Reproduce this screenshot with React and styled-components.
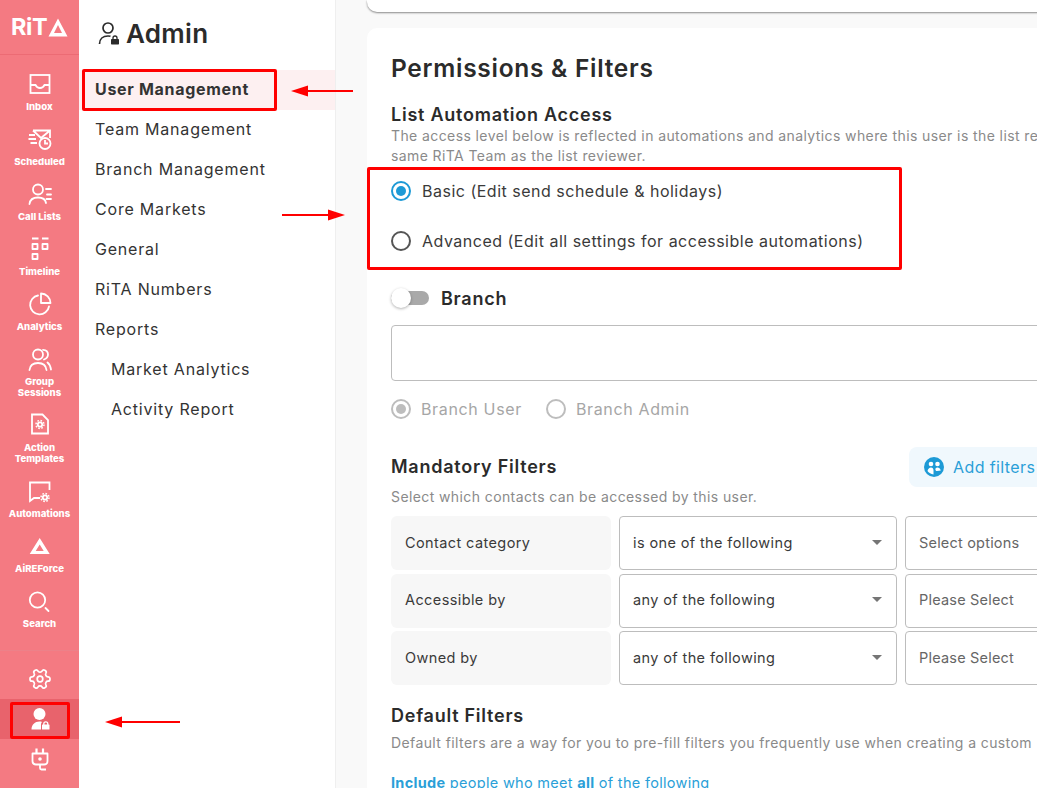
import React from "react";
import styled, { createGlobalStyle } from "styled-components";

const Global = createGlobalStyle`
  html, body { margin: 0; padding: 0; background: #f9f9f9; }
  * { box-sizing: border-box; }
  body { font-family: Inter, "Noto Sans", sans-serif; color: #2b2b2b; }
`;

const Page = styled.div`
  position: relative;
  display: flex;
  width: 1037px;
  height: 788px;
  overflow: hidden;
`;

const Rail = styled.nav`
  width: 79px;
  flex: none;
  display: flex;
  flex-direction: column;
  background: #f47a82;
  color: #fff;
`;
const LogoBar = styled.div`
  height: 55px;
  flex: none;
  display: flex;
  align-items: center;
  gap: 1px;
  padding: 0 0 0 11px;
  border-bottom: 1px solid #ec6b74;
`;
const LogoText = styled.span`
  font-size: 23.5px;
  font-weight: 700;
  letter-spacing: -0.4px;
  line-height: 1;
`;
const RailList = styled.div`
  flex: 1;
  display: flex;
  flex-direction: column;
  padding-top: 17px;
`;
const RailItem = styled.div`
  display: flex;
  flex-direction: column;
  align-items: center;
  padding-bottom: 15px;
`;
const RailIcon = styled.svg`
  width: 24px;
  height: 24px;
  display: block;
  flex: none;
`;
const RailLabel = styled.span`
  margin-top: 5px;
  font-size: 9.6px;
  line-height: 11px;
  font-weight: 800;
  text-align: center;
`;
const RailBottom = styled.div`
  height: 138px;
  flex: none;
  border-top: 1px solid #ec8189;
  padding-top: 8px;
`;
const RailButton = styled.div`
  height: 40px;
  display: flex;
  align-items: center;
  justify-content: center;
  background: ${(p) => (p.$active ? "#e8636c" : "transparent")};
`;

const Menu = styled.aside`
  width: 257px;
  flex: none;
  background: #fff;
  border-right: 1px solid #efefef;
`;
const MenuHead = styled.div`
  height: 70px;
  display: flex;
  align-items: center;
  gap: 6px;
  padding: 0 0 4px 19px;
`;
const MenuTitle = styled.h1`
  margin: 0;
  font-size: 26px;
  font-weight: 600;
  letter-spacing: 0.3px;
  color: #2b2b2b;
`;
const MenuItem = styled.div`
  height: 40px;
  display: flex;
  align-items: center;
  padding: 0 0 2px ${(p) => (p.$sub ? "32px" : "16px")};
  font-size: 16px;
  font-weight: ${(p) => (p.$active ? 700 : 400)};
  letter-spacing: ${(p) => (p.$active ? "0.7px" : "0.8px")};
  color: #333;
  background: ${(p) => (p.$active ? "#fdf0f1" : "transparent")};
`;

const Main = styled.main`
  flex: 1;
  min-width: 0;
  padding-left: 31px;
  background: #f9f9f9;
`;
const TopCard = styled.div`
  width: 800px;
  height: 12px;
  background: #fff;
  border-radius: 0 0 10px 10px;
  box-shadow: 0 1px 2px rgba(0, 0, 0, 0.45);
`;
const Card = styled.section`
  width: 800px;
  height: 800px;
  margin-top: 16px;
  padding: 25px 24px 0;
  background: #fff;
  border-radius: 10px;
`;
const CardTitle = styled.h2`
  margin: 0;
  font-size: 24.5px;
  line-height: 30px;
  font-weight: 600;
  letter-spacing: 0.72px;
  color: #2b2b2b;
`;
const SectionTitle = styled.h3`
  margin: ${(p) => p.$mt || "0"} 0 0;
  font-size: 18px;
  line-height: 22px;
  font-weight: 600;
  letter-spacing: 0.75px;
  color: #2b2b2b;
`;
const Hint = styled.p`
  margin: ${(p) => p.$mt || "0"} 0 0;
  font-size: 14px;
  line-height: 20px;
  letter-spacing: 0.4px;
  color: #8a8a8a;
  white-space: nowrap;
`;
const RadioColumn = styled.div`
  display: flex;
  flex-direction: column;
`;
const RadioRow = styled.div`
  height: 50px;
  display: flex;
  align-items: center;
  gap: 11px;
  font-size: 16px;
  letter-spacing: 0.5px;
  color: #3a3a3a;
`;
const Radio = styled.span`
  width: 20px;
  height: 20px;
  flex: none;
  border-radius: 50%;
  border: 2px solid ${(p) => p.$color};
  display: flex;
  align-items: center;
  justify-content: center;
  &::after {
    content: "";
    display: ${(p) => (p.$on ? "block" : "none")};
    width: 10px;
    height: 10px;
    border-radius: 50%;
    background: ${(p) => p.$color};
  }
`;
const ToggleRow = styled.div`
  margin-top: 20px;
  height: 24px;
  display: flex;
  align-items: center;
  gap: 12px;
`;
const Toggle = styled.span`
  position: relative;
  width: 38px;
  height: 14px;
  flex: none;
  border-radius: 7px;
  background: #a9a9a9;
  &::after {
    content: "";
    position: absolute;
    left: 0;
    top: -3px;
    width: 20px;
    height: 20px;
    border-radius: 50%;
    background: #fff;
    box-shadow: 0 1px 3px rgba(0, 0, 0, 0.3);
  }
`;
const BranchLabel = styled(SectionTitle)`
  padding-top: 2px;
`;
const BranchBox = styled.div`
  margin-top: 15px;
  height: 56px;
  border: 1px solid #bdbdbd;
  border-radius: 4px;
`;
const DisabledRow = styled.div`
  margin-top: 16px;
  height: 24px;
  display: flex;
  align-items: center;
  gap: 24px;
`;
const DisabledOption = styled.div`
  display: flex;
  align-items: center;
  gap: 10px;
  font-size: 16px;
  letter-spacing: 0.65px;
  color: #a6a6a6;
`;
const FilterHead = styled.div`
  margin-top: 26px;
  height: 40px;
  display: flex;
  align-items: center;
  justify-content: space-between;
`;
const AddButton = styled.div`
  width: 234px;
  height: 40px;
  display: flex;
  align-items: center;
  gap: 8px;
  padding-left: 14px;
  background: #f0f8fd;
  border-radius: 8px 0 0 8px;
  color: #2a9fd8;
  font-size: 16px;
  letter-spacing: 0.4px;
`;
const FilterGrid = styled.div`
  margin-top: 9px;
  display: grid;
  grid-template-columns: 220px 278px 300px;
  grid-auto-rows: 54px;
  column-gap: 8px;
  row-gap: 3.5px;
`;
const FilterName = styled.div`
  display: flex;
  align-items: center;
  padding: 0 0 2px 14px;
  background: #f7f7f7;
  border-radius: 6px;
  font-size: 14.5px;
  letter-spacing: 0.4px;
  color: #3a3a3a;
`;
const Select = styled.div`
  display: flex;
  align-items: center;
  justify-content: space-between;
  padding: 0 14px 2px 13px;
  border: 1px solid #bdbdbd;
  border-radius: 4px;
  font-size: 14.5px;
  letter-spacing: ${(p) => (p.$muted ? "0.2px" : "0.38px")};
  color: ${(p) => (p.$muted ? "#666" : "#3a3a3a")};
`;
const Caret = styled.span`
  width: 0;
  height: 0;
  border-left: 5px solid transparent;
  border-right: 5px solid transparent;
  border-top: 5px solid #757575;
`;
const Rule = styled.p`
  margin: 20px 0 0;
  font-size: 14.5px;
  line-height: 20px;
  letter-spacing: 0.3px;
  color: #2a9fd8;
  white-space: nowrap;
`;

const Mark = styled.div`
  position: absolute;
  left: ${(p) => p.$x}px;
  top: ${(p) => p.$y}px;
  width: ${(p) => p.$w}px;
  height: ${(p) => p.$h}px;
  border: 3px solid #ff0000;
  border-radius: 2px;
  pointer-events: none;
`;
const ArrowSvg = styled.svg`
  position: absolute;
  left: ${(p) => p.$x}px;
  top: ${(p) => p.$y}px;
`;

const Arrow = ({ x, y, w, dir }) => (
  <ArrowSvg $x={x} $y={y - 6} width={w} height="12" viewBox={`0 0 ${w} 12`}>
    {dir === "left" ? (
      <>
        <path d={`M16 6H${w}`} stroke="#f00" strokeWidth="2" />
        <path d="M0 6L17 0.5V11.5Z" fill="#f00" />
      </>
    ) : (
      <>
        <path d={`M0 6H${w - 16}`} stroke="#f00" strokeWidth="2" />
        <path d={`M${w} 6L${w - 17} 0.5V11.5Z`} fill="#f00" />
      </>
    )}
  </ArrowSvg>
);

const S = { fill: "none", stroke: "#fff", strokeWidth: 1.8, strokeLinecap: "round", strokeLinejoin: "round" };

const MiniGear = ({ cx, cy }) => (
  <g>
    <circle cx={cx} cy={cy} r="3.1" fill="#fff" />
    <circle cx={cx} cy={cy} r="4" fill="none" stroke="#fff" strokeWidth="1.5" strokeDasharray="1.6 1.54" />
    <circle cx={cx} cy={cy} r="1.2" fill="#f47a82" />
  </g>
);

const icons = {
  inbox: (
    <g {...S} strokeLinecap="butt" strokeLinejoin="miter">
      <rect x="2.5" y="3" width="19" height="18" />
      <path d="M2.5 13H7.5C8.5 15 10 16 12 16S15.5 15 16.5 13H21.5" />
    </g>
  ),
  scheduled: (
    <g {...S} strokeLinecap="butt" strokeLinejoin="miter">
      <path d="M5 3.500H22V11M5 3.500L13 11L22 3.500" />
      <path d="M1 8H7M0.500 12H8M2.500 16H9" />
      <circle cx="17" cy="16.500" r="5.500" />
      <path d="M17 13V16.500H20" />
    </g>
  ),
  calls: (
    <g {...S}>
      <circle cx="10" cy="7.5" r="5" />
      <path d="M1.5 22C2 17.5 5.5 15.5 10 15.5S17.5 17.500 18 21" />
      <path d="M18 7H23M19 12.500H23M18.500 17H23" />
    </g>
  ),
  timeline: (
    <g {...S} strokeLinecap="butt" strokeLinejoin="round">
      <path d="M4 1.500H10.500M14 1.500H20.500" />
      <rect x="4.500" y="7" width="5" height="5" />
      <rect x="14.500" y="7" width="5" height="5" />
      <rect x="4.500" y="17" width="5" height="5" />
    </g>
  ),
  analytics: (
    <g {...S}>
      <path d="M10 3.500A9.500 9.500 0 1 0 21 14.500" />
      <path d="M13 1.500A9.500 9.500 0 0 1 22.500 11H13Z" />
    </g>
  ),
  group: (
    <g {...S}>
      <circle cx="10" cy="7.500" r="5" />
      <path d="M1.500 23C2 18.500 5.500 16 10 16S18 18.500 18.500 23" />
      <path d="M15 2.800C18 3 20 5 20 7.500S18.500 11.500 16 12.500M19.500 15.500C21.500 17 22.500 19.500 23 22.500" />
    </g>
  ),
  action: (
    <g>
      <path {...S} strokeLinecap="butt" strokeLinejoin="miter" d="M4 1.500H14.500L20 7V20.500H4Z" />
      <MiniGear cx={12} cy={11.5} />
    </g>
  ),
  automations: (
    <g>
      <path {...S} strokeLinecap="butt" strokeLinejoin="miter" d="M21.500 11V3.500H2V22L6 19H12" />
      <MiniGear cx={17} cy={18.5} />
    </g>
  ),
  force: <path d="M11.700 4L21.700 20H1.700ZM11.700 10.500L7.700 17H15.700Z" fill="#fff" fillRule="evenodd" />,
  search: (
    <g {...S}>
      <circle cx="9.500" cy="11" r="7.700" />
      <path d="M17.500 19L20.500 22" />
    </g>
  ),
  gear: (
    <g {...S} strokeWidth="1.700" transform="rotate(90 12 12)">
      <path d="M12.220 2h-.44a2 2 0 0 0-2 2v.18a2 2 0 0 1-1 1.730l-.43.25a2 2 0 0 1-2 0l-.15-.08a2 2 0 0 0-2.730.73l-.22.38a2 2 0 0 0 .73 2.730l.15.1a2 2 0 0 1 1 1.720v.51a2 2 0 0 1-1 1.740l-.15.09a2 2 0 0 0-.73 2.730l.22.38a2 2 0 0 0 2.730.73l.15-.08a2 2 0 0 1 2 0l.43.25a2 2 0 0 1 1 1.730V20a2 2 0 0 0 2 2h.44a2 2 0 0 0 2-2v-.18a2 2 0 0 1 1-1.730l.43-.25a2 2 0 0 1 2 0l.15.08a2 2 0 0 0 2.730-.73l.22-.39a2 2 0 0 0-.73-2.730l-.15-.08a2 2 0 0 1-1-1.740v-.5a2 2 0 0 1 1-1.740l.15-.09a2 2 0 0 0 .73-2.730l-.22-.38a2 2 0 0 0-2.730-.73l-.15.08a2 2 0 0 1-2 0l-.43-.25a2 2 0 0 1-1-1.730V4a2 2 0 0 0-2-2z" />
      <circle cx="12" cy="12" r="2.800" />
    </g>
  ),
  admin: (
    <g fill="#fff">
      <circle cx="11.500" cy="7" r="6" />
      <path d="M3.500 22.500C3.500 17.500 7 14.500 11.500 14.500C12.500 14.500 13.300 14.600 14 14.900C13.400 15.600 13 16.300 13 17.200V22.500Z" />
      <rect x="14" y="17.500" width="7.500" height="5" rx="0.600" />
      <path d="M15.800 18V16.800A2 2 0 0 1 19.800 16.800V18" fill="none" stroke="#fff" strokeWidth="1.300" />
    </g>
  ),
  plug: (
    <g {...S} strokeLinecap="butt">
      <path d="M8.500 1.500V6M15 1.500V6" strokeWidth="2.200" />
      <path d="M4.500 6.500H19.500V14C19.500 16 18 17.500 16 17.500H8C6 17.500 4.500 16 4.500 14Z" />
      <circle cx="12" cy="12" r="0.900" fill="#fff" />
      <path d="M12 17.500V21C12 22 12.500 22.500 13.500 22.500H18" />
    </g>
  ),
};

const RailGlyph = ({ name }) => <RailIcon viewBox="0 0 24 24">{icons[name]}</RailIcon>;

const railItems = [
  ["inbox", ["Inbox"]],
  ["scheduled", ["Scheduled"]],
  ["calls", ["Call Lists"]],
  ["timeline", ["Timeline"]],
  ["analytics", ["Analytics"]],
  ["group", ["Group", "Sessions"]],
  ["action", ["Action", "Templates"]],
  ["automations", ["Automations"]],
  ["force", ["AiREForce"]],
  ["search", ["Search"]],
];

const menu = [
  ["User Management", { $active: true }],
  ["Team Management", {}],
  ["Branch Management", {}],
  ["Core Markets", {}],
  ["General", {}],
  ["RiTA Numbers", {}],
  ["Reports", {}],
  ["Market Analytics", { $sub: true }],
  ["Activity Report", { $sub: true }],
];

const filters = [
  ["Contact category", "is one of the following", "Select options"],
  ["Accessible by", "any of the following", "Please Select"],
  ["Owned by", "any of the following", "Please Select"],
];

export default function App() {
  return (
    <Page>
      <Global />
      <Rail>
        <LogoBar>
          <LogoText>RiT</LogoText>
          <svg width="20" height="19" viewBox="0 0 20 19">
            <path d="M10 0.500L19.500 18.500H0.500ZM10 7L6 15H14Z" fill="#fff" fillRule="evenodd" />
          </svg>
        </LogoBar>
        <RailList>
          {railItems.map(([icon, lines]) => (
            <RailItem key={icon}>
              <RailGlyph name={icon} />
              <RailLabel>
                {lines.map((l, i) => (
                  <React.Fragment key={l}>
                    {i > 0 && <br />}
                    {l}
                  </React.Fragment>
                ))}
              </RailLabel>
            </RailItem>
          ))}
        </RailList>
        <RailBottom>
          <RailButton><RailGlyph name="gear" /></RailButton>
          <RailButton $active><RailGlyph name="admin" /></RailButton>
          <RailButton><RailGlyph name="plug" /></RailButton>
        </RailBottom>
      </Rail>

      <Menu>
        <MenuHead>
          <svg width="22" height="24" viewBox="0 0 22 24" fill="none" stroke="#2b2b2b" strokeWidth="1.700">
            <circle cx="10" cy="7" r="5" />
            <path d="M1.500 23C1.500 18 5 15 10 15C11 15 11.800 15.100 12.500 15.300" />
            <rect x="13" y="18" width="8" height="5.500" rx="0.700" fill="#2b2b2b" stroke="none" />
            <path d="M15 18.500V17A2 2 0 0 1 19 17V18.500" strokeWidth="1.300" />
          </svg>
          <MenuTitle>Admin</MenuTitle>
        </MenuHead>
        {menu.map(([label, props]) => (
          <MenuItem key={label} {...props}>{label}</MenuItem>
        ))}
      </Menu>

      <Main>
        <TopCard />
        <Card>
          <CardTitle>Permissions &amp; Filters</CardTitle>
          <SectionTitle $mt="21px">List Automation Access</SectionTitle>
          <Hint>The access level below is reflected in automations and analytics where this user is the list reviewer</Hint>
          <Hint>same RiTA Team as the list reviewer.</Hint>
          <RadioColumn>
            <RadioRow><Radio $on $color="#1d9ad6" />Basic (Edit send schedule &amp; holidays)</RadioRow>
            <RadioRow><Radio $color="#555" />Advanced (Edit all settings for accessible automations)</RadioRow>
          </RadioColumn>
          <ToggleRow>
            <Toggle />
            <BranchLabel>Branch</BranchLabel>
          </ToggleRow>
          <BranchBox />
          <DisabledRow>
            <DisabledOption><Radio $on $color="#bdbdbd" />Branch User</DisabledOption>
            <DisabledOption><Radio $color="#bdbdbd" />Branch Admin</DisabledOption>
          </DisabledRow>
          <FilterHead>
            <SectionTitle>Mandatory Filters</SectionTitle>
            <AddButton>
              <svg width="22" height="22" viewBox="0 0 22 22">
                <circle cx="11" cy="11" r="10" fill="#1d9ad6" />
                <circle cx="8" cy="8" r="2.300" fill="#fff" />
                <circle cx="14.500" cy="8" r="2.300" fill="#fff" />
                <path d="M4.500 15C5 12.800 6.300 11.500 8 11.500C9.500 11.500 10.500 12.500 10.500 14.500V18.500C8 18 5.800 16.800 4.500 15Z" fill="#fff" />
                <path d="M12.300 13C12.800 12 13.500 11.500 14.500 11.500C16 11.500 17.200 12.800 17.800 14.500C16.800 14.800 15.500 15 13.800 15C13 15 12.500 14.500 12.300 13Z" fill="#fff" />
              </svg>
              Add filters
            </AddButton>
          </FilterHead>
          <Hint>Select which contacts can be accessed by this user.</Hint>
          <FilterGrid>
            {filters.map(([name, op, value]) => (
              <React.Fragment key={name}>
                <FilterName>{name}</FilterName>
                <Select>{op}<Caret /></Select>
                <Select $muted>{value}</Select>
              </React.Fragment>
            ))}
          </FilterGrid>
          <SectionTitle $mt="20px">Default Filters</SectionTitle>
          <Hint $mt="6px">Default filters are a way for you to pre-fill filters you frequently use when creating a custom</Hint>
          <Rule><b>Include</b> people who meet <b>all</b> of the following</Rule>
        </Card>
      </Main>

      <Mark $x={82} $y={69} $w={195} $h={42} />
      <Mark $x={367} $y={167} $w={535} $h={103} />
      <Mark $x={10} $y={702} $w={60} $h={37} />
      <Arrow x={291} y={91} w={62} dir="left" />
      <Arrow x={282} y={215} w={63} dir="right" />
      <Arrow x={105} y={722} w={75} dir="left" />
    </Page>
  );
}
